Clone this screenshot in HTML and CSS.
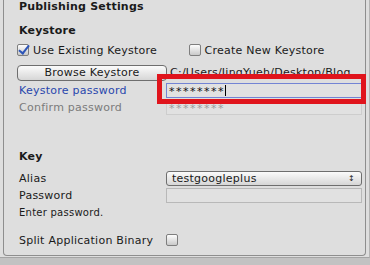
FILE: index.html
```html
<!DOCTYPE html>
<html lang="en">
<head>
  <meta charset="UTF-8">
  <title>Publishing Settings</title>
  <link rel="stylesheet" href="styles.css">
</head>
<body>
  <div class="inspector">
    <div class="panel">
      <div class="title">Publishing Settings</div>

      <!-- Keystore -->
      <div class="heading">Keystore</div>
      <div class="row check-row">
        <label class="check"><span class="box checked"></span>Use Existing Keystore</label>
        <label class="check"><span class="box"></span>Create New Keystore</label>
      </div>
      <div class="row browse-row">
        <button class="button browse">Browse Keystore</button>
        <span class="path">C:/Users/JingYueh/Desktop/Blog</span>
      </div>
      <div class="row field-row pw-row">
        <span class="label active">Keystore password</span>
        <span class="input focused">********<i class="caret"></i></span>
      </div>
      <div class="row field-row">
        <span class="label muted">Confirm password</span>
        <span class="input disabled">********</span>
      </div>

      <!-- Key -->
      <div class="heading key">Key</div>
      <div class="row field-row alias-row">
        <span class="label">Alias</span>
        <span class="button popup">testgoogleplus<span class="arrows">&#8597;</span></span>
      </div>
      <div class="row field-row">
        <span class="label">Password</span>
        <span class="input"></span>
      </div>
      <div class="hint">Enter password.</div>
      <div class="row split-row">
        <span class="label">Split Application Binary</span>
        <span class="box"></span>
      </div>

      <!-- annotation -->
      <div class="highlight"></div>
    </div>
  </div>
</body>
</html>
```

FILE: styles.css
```css
body {
  margin: 0;
  background-color: #c2c2c2;
  font-family: "DejaVu Sans", Verdana, sans-serif;
  font-size: 11px;
  color: #1a1a1a;
  letter-spacing: 0.25px;
}
.inspector {
  background-color: #dedede;
  height: 258px;
  border-bottom: 1px solid #a4a4a4;
  border-right: 1px solid #b4b4b4;
  box-sizing: border-box;
  overflow: hidden;
}
.panel {
  position: relative;
  margin: 0 3px 0 3px;
  height: 256px;
  box-sizing: border-box;
  border: 1px solid #8e8e8e;
  border-top: none;
  border-radius: 0 0 4px 4px;
  padding: 0 3px 0 15px;
}
.title, .heading {
  font-weight: bold;
  height: 14px;
  line-height: 14px;
  letter-spacing: 0.2px;
}
.heading {
  margin-top: 10px;
}
.heading.key {
  margin-top: 35px;
}
.row {
  display: flex;
  align-items: center;
}
.check-row {
  height: 14px;
  margin-top: 5px;
}
.check {
  display: flex;
  align-items: center;
  width: 175px;
  margin-left: -2px;
}
.check .box {
  margin-right: 4px;
}
.box {
  display: inline-block;
  position: relative;
  width: 10px;
  height: 10px;
  border: 1px solid #7e7e7e;
  border-radius: 2px;
  background: linear-gradient(#fdfdfd, #c9c9c9);
}
.box.checked::after {
  content: "";
  position: absolute;
  left: 3px;
  top: -2px;
  width: 4px;
  height: 9px;
  border: solid #2d55b8;
  border-width: 0 2px 2px 0;
  transform: rotate(38deg);
}
.browse-row {
  height: 15px;
  margin-top: 8px;
}
.button {
  box-sizing: border-box;
  border: 1px solid #6e6e6e;
  border-radius: 4px;
  background: linear-gradient(#fbfbfb, #d6d6d6);
  font-family: inherit;
  font-size: 11px;
  letter-spacing: 0.25px;
  color: #1a1a1a;
}
.browse {
  width: 150px;
  height: 16px;
  margin-left: -2px;
  padding: 0;
  line-height: 13px;
}
.path {
  margin-left: 3px;
  white-space: nowrap;
  overflow: hidden;
  width: 192px;
}
.field-row {
  height: 15px;
  margin-top: 2px;
}
.pw-row {
  margin-top: 3px;
}
.alias-row {
  margin-top: 7px;
}
.label {
  width: 147px;
  flex-shrink: 0;
}
.label.active {
  color: #2947ad;
}
.label.muted {
  color: #7b7b7b;
}
.input {
  display: flex;
  align-items: center;
  box-sizing: border-box;
  width: 196px;
  height: 15px;
  border: 1px solid #b8b8b8;
  background-color: #e1e1e1;
  padding: 2px 0 0 2px;
  letter-spacing: 1.5px;
}
.input.focused {
  border-color: #7384d4;
  color: #111;
}
.input.disabled {
  border-color: #cdcdcd;
  color: #9c9c9c;
}
.caret {
  display: inline-block;
  width: 1px;
  height: 11px;
  margin-top: -2px;
  background-color: #000;
}
.popup {
  display: flex;
  align-items: center;
  justify-content: space-between;
  width: 196px;
  height: 15px;
  padding: 0 6px 0 5px;
  border-radius: 3px;
}
.arrows {
  font-size: 8px;
}
.hint {
  font-size: 10px;
  height: 14px;
  line-height: 14px;
  margin-top: 3px;
}
.split-row {
  height: 14px;
  margin-top: 13px;
}
.highlight {
  position: absolute;
  left: 153px;
  top: 74px;
  width: 199px;
  height: 20px;
  border: 5px solid #e0141c;
}
```
